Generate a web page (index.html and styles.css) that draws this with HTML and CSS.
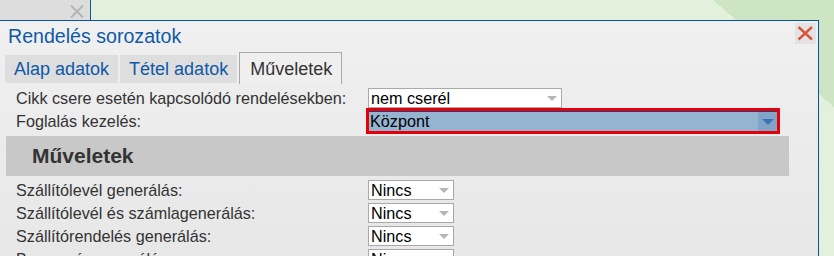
FILE: index.html
```html
<!DOCTYPE html>
<html lang="hu">
<head>
    <meta charset="UTF-8">
    <meta name="viewport" content="width=device-width, initial-scale=1.0">
    <title>Rendelés sorozatok</title>
    <link rel="stylesheet" href="styles.css">
</head>
<body>
    <div class="topbar">
        <div class="doc-tab">
            <svg class="doc-close" width="14" height="13" viewBox="0 0 14 13">
                <path d="M1 0.5 L13 12.5 M13 0.5 L1 12.5" stroke="#b4b4b4" stroke-width="2" fill="none"/>
            </svg>
        </div>
    </div>

    <div class="dialog">
        <div class="dialog-head">
            <h1 class="dialog-title">Rendelés sorozatok</h1>
            <div class="dialog-close">
                <svg width="21" height="21" viewBox="0 0 21 21">
                    <path d="M3.5 4 L17 16.5 M17 4 L3.5 16.5" stroke="#d9553a" stroke-width="2.4" fill="none"/>
                </svg>
            </div>
        </div>

        <div class="tabs">
            <div class="tab">Alap adatok</div>
            <div class="tab">Tétel adatok</div>
            <div class="tab active">Műveletek</div>
        </div>

        <div class="form">
            <div class="row">
                <label>Cikk csere esetén kapcsolódó rendelésekben:</label>
                <div class="select wide">nem cserél<span class="arrow"></span></div>
            </div>
            <div class="row row-focus">
                <label>Foglalás kezelés:</label>
                <div class="select focused">
                    <div class="focus-inner">
                        <span class="focus-text">Központ</span>
                        <span class="focus-btn"><span class="arrow blue"></span></span>
                    </div>
                </div>
            </div>

            <div class="section">Műveletek</div>

            <div class="ops">
                <div class="row">
                    <label>Szállítólevél generálás:</label>
                    <div class="select small">Nincs<span class="arrow"></span></div>
                </div>
                <div class="row">
                    <label>Szállítólevél és számlagenerálás:</label>
                    <div class="select small">Nincs<span class="arrow"></span></div>
                </div>
                <div class="row">
                    <label>Szállítórendelés generálás:</label>
                    <div class="select small">Nincs<span class="arrow"></span></div>
                </div>
                <div class="row">
                    <label>Beszerzés generálás:</label>
                    <div class="select small">Nincs<span class="arrow"></span></div>
                </div>
            </div>
        </div>
    </div>
</body>
</html>
```

FILE: styles.css
```css
body {
    margin: 0;
    width: 834px;
    height: 256px;
    overflow: hidden;
    font-family: 'Liberation Sans', Arial, sans-serif;
    background: linear-gradient(41.6deg, #e3f0dc 665px, #cde5c3 665px);
}

.topbar {
    height: 20px;
    display: flex;
}

.doc-tab {
    width: 90px;
    background-color: #dddddd;
    border-right: 1px solid #0a52a6;
    display: flex;
    justify-content: flex-end;
    align-items: center;
}

.doc-close {
    margin-right: 6px;
    margin-top: 2px;
}

.dialog {
    width: 818px;
    height: 236px;
    border-top: 1px solid #0a52a6;
    border-right: 1px solid #0a52a6;
    background: linear-gradient(#f0f0f0, #e7e7e7);
}

.dialog-head {
    height: 31px;
    display: flex;
    justify-content: space-between;
    align-items: flex-start;
}

.dialog-title {
    margin: 0;
    padding-left: 8px;
    font-size: 19.6px;
    font-weight: normal;
    line-height: 31px;
    color: #0f5aa8;
}

.dialog-close {
    width: 21px;
    height: 21px;
    margin-top: 2px;
    margin-right: 2px;
    background-color: #e3e3e3;
}

.dialog-close svg {
    display: block;
}

.tabs {
    height: 32px;
    display: flex;
    align-items: flex-end;
    gap: 2px;
    padding-left: 5px;
}

.tab {
    height: 28px;
    line-height: 28px;
    padding: 0 9px;
    font-size: 18px;
    color: #0f58a6;
    background-color: #dedede;
    margin-bottom: 1px;
}

.tab.active {
    height: 31px;
    line-height: 33px;
    margin-bottom: 0;
    padding: 0 9px 0 10px;
    color: #333333;
    background-color: #efefef;
    border: 1px solid #a9a9a9;
    border-bottom: none;
}

.form {
    padding: 4px 0 0 6px;
    display: flex;
    flex-direction: column;
}

.row {
    display: grid;
    grid-template-columns: 352px auto;
    align-items: center;
    height: 20px;
    padding-left: 10px;
}

.row-focus {
    height: 26px;
}

label {
    font-size: 16.2px;
    color: #333333;
    white-space: nowrap;
}

.select {
    box-sizing: border-box;
    height: 20px;
    display: flex;
    justify-content: space-between;
    align-items: center;
    padding: 0 4px 0 2px;
    background-color: #ffffff;
    border: 1px solid #a9a9a9;
    font-size: 16.2px;
    color: #000000;
}

.select.wide {
    width: 194px;
}

.select.small {
    width: 86px;
}

.arrow {
    width: 0;
    height: 0;
    border-left: 5px solid transparent;
    border-right: 5px solid transparent;
    border-top: 5px solid #b6b6b6;
}

.arrow.blue {
    border-left-width: 6px;
    border-right-width: 6px;
    border-top: 6px solid #3a73b5;
}

.select.focused {
    width: 414px;
    height: 26px;
    margin-left: -2px;
    padding: 0;
    border: 3px solid #e6000a;
    background-color: #95b4d1;
}

.focus-inner {
    width: 100%;
    height: 100%;
    box-sizing: border-box;
    border-top: 1px solid #1f3f7c;
    display: flex;
    justify-content: space-between;
}

.focus-text {
    padding-left: 1px;
    line-height: 19px;
}

.focus-btn {
    width: 19px;
    background-color: #81a4c8;
    display: flex;
    justify-content: center;
    align-items: center;
}

.section {
    height: 40px;
    width: 783px;
    margin: 2px 0 4px 0;
    padding-left: 26px;
    box-sizing: border-box;
    background-color: #c8c8c8;
    font-size: 21px;
    font-weight: bold;
    line-height: 40px;
    color: #333333;
}

.ops {
    display: grid;
    row-gap: 3px;
}
```
